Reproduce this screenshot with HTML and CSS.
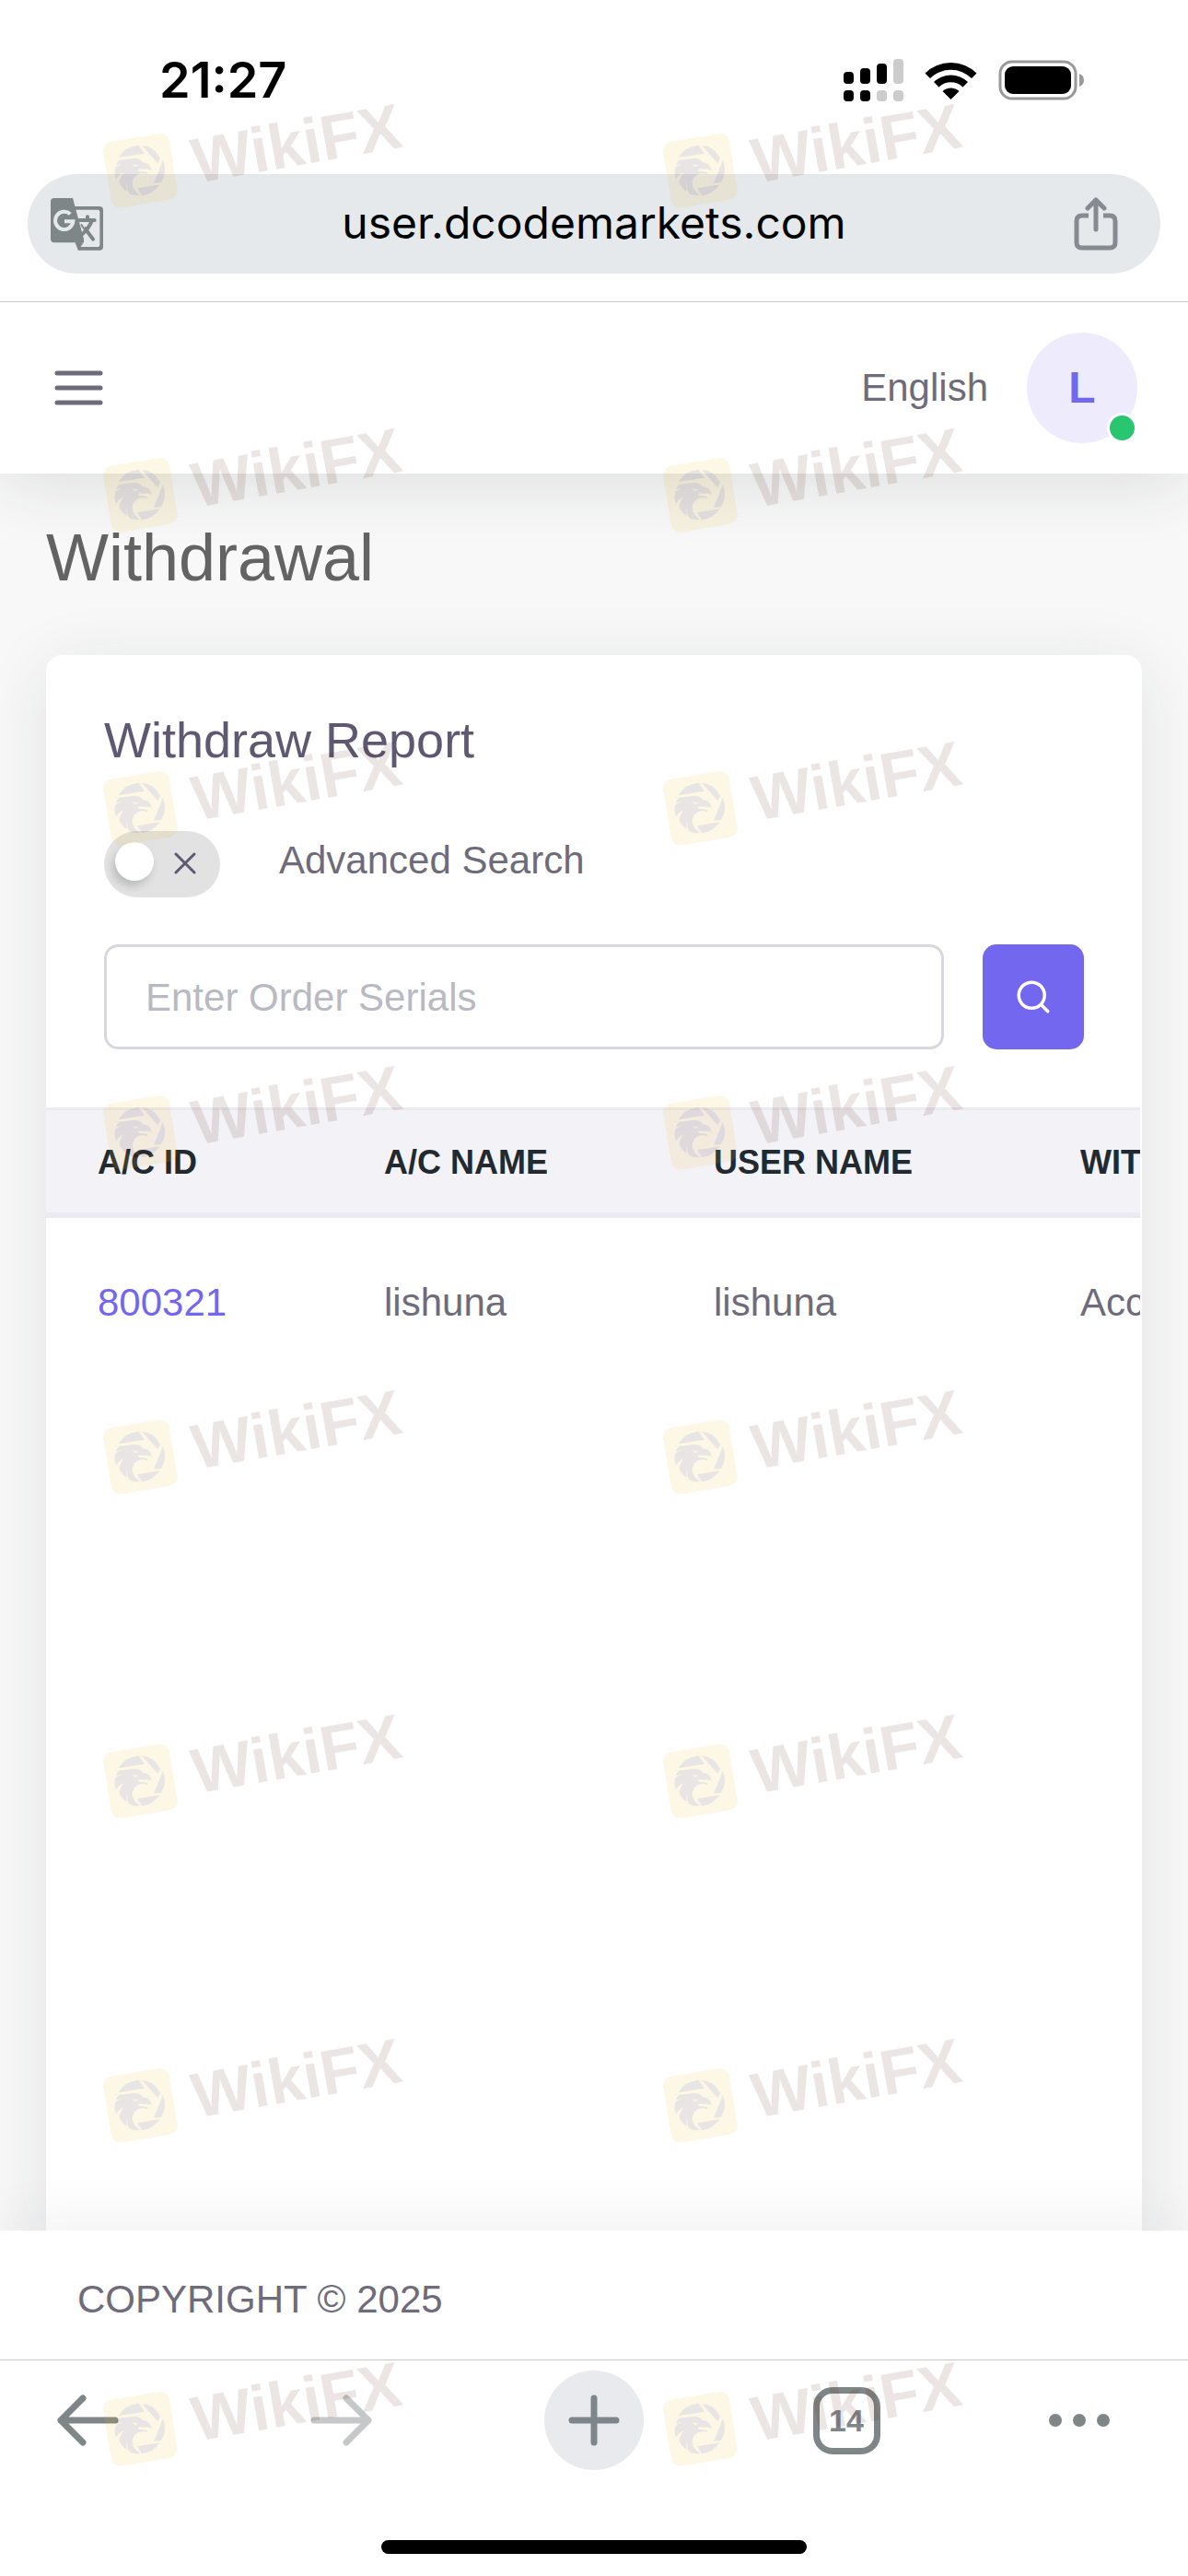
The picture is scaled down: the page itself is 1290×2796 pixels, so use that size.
FILE: index.html
```html
<!DOCTYPE html>
<html lang="en">
<head>
    <meta charset="UTF-8">
    <meta name="viewport" content="width=device-width, initial-scale=1.0">
    <title>Withdrawal</title>
    <link rel="stylesheet" href="styles.css">
</head>
<body>
    <!-- Phone status bar and address bar -->
    <div class="browser-top">
        <div class="status-bar">
            <span class="time">21:27</span>
            <div class="status-icons">
                <svg width="65" height="46" viewBox="0 0 65 46">
                    <rect x="0" y="14" width="11" height="13" rx="4"/>
                    <rect x="18" y="10" width="11" height="17" rx="4"/>
                    <rect x="36" y="5" width="11" height="22" rx="4"/>
                    <rect class="dim" x="54" y="0" width="11" height="27" rx="4"/>
                    <rect x="0" y="34" width="11" height="12" rx="4"/>
                    <rect x="18" y="34" width="11" height="12" rx="4"/>
                    <rect class="dim" x="36" y="34" width="11" height="12" rx="4"/>
                    <rect class="dim" x="54" y="34" width="11" height="12" rx="4"/>
                </svg>
                <svg width="57" height="42" viewBox="0 0 57 42">
                    <path d="M0.5 13.5A40 40 0 0 1 56.5 13.5L51 19A32 32 0 0 0 6 19Z"/>
                    <path d="M10 23A26.500 26.500 0 0 1 47 23L41.500 28.500A18.500 18.500 0 0 0 15.500 28.500Z"/>
                    <path d="M19.500 33A13 13 0 0 1 37.500 33L28.500 42Z"/>
                </svg>
                <svg width="93" height="44" viewBox="0 0 93 44">
                    <rect x="2" y="2" width="82" height="40" rx="13" fill="none" stroke="#999" stroke-width="3"/>
                    <rect x="7" y="7" width="72" height="30" rx="9"/>
                    <path class="cap" d="M88 15Q93 17 93 22T88 29Z"/>
                </svg>
            </div>
        </div>
        <div class="url-bar">
            <button class="icon-btn" aria-label="Translate">
                <svg width="57" height="57" viewBox="0 0 171 171">
                    <path fill="#7f8687" d="M74 27H159a12 12 0 0 1 12 12V158a12 12 0 0 1-12 12H90L80 143Z"/>
                    <path fill="#e5e9ec" d="M80 38H154a6 6 0 0 1 6 6V153a6 6 0 0 1-6 6H88L108 136Z"/>
                    <path fill="#7f8687" d="M12 0H72L108 134V145H12A12 12 0 0 1 0 133V12A12 12 0 0 1 12 0Z"/>
                    <path fill="#7f8687" d="M80 145H107L90 170Z"/>
                    <path fill="none" stroke="#e5e9ec" stroke-width="12" d="M64 52A29 29 0 1 0 73 76H45"/>
                    <path fill="none" stroke="#7f8687" stroke-width="12" stroke-linecap="round" d="M92 72H143M120 61V72M134 74Q124 100 98 122M104 88L138 134"/>
                    <path fill="#e5e9ec" d="M98 79H119Q116 90 110 97Z"/>
                </svg>
            </button>
            <span class="url">user.dcodemarkets.com</span>
            <button class="icon-btn" aria-label="Share">
                <svg width="48" height="58" viewBox="0 0 48 58" fill="none" stroke="#868b91" stroke-width="5" stroke-linecap="round" stroke-linejoin="round">
                    <path stroke-linecap="butt" d="M16 20H9Q3 20 3 26V49Q3 55 9 55H39Q45 55 45 49V26Q45 20 39 20H32"/>
                    <path d="M24 35V3M15 12L24 3L33 12"/>
                </svg>
            </button>
        </div>
    </div>

    <header class="navbar">
        <button class="icon-btn" aria-label="Open menu">
            <svg width="53" height="38" viewBox="0 0 53 38" stroke="#6e6b7b" stroke-width="5" stroke-linecap="round">
                <path d="M3 3H50M3 19H50M3 35H50"/>
            </svg>
        </button>
        <nav class="navbar-right">
            <a class="language" href="#">English</a>
            <a class="avatar" href="#">L<span class="avatar-status"></span></a>
        </nav>
    </header>

    <main class="content">
        <h1>Withdrawal</h1>

        <section class="card">
            <div class="card-header">
                <h2>Withdraw Report</h2>
                <div class="advanced">
                    <span class="switch">
                        <input type="checkbox" id="advanced-search">
                        <svg class="switch-icon" width="24" height="24" viewBox="0 0 24 24" stroke="#5e5873" stroke-width="3" stroke-linecap="round">
                            <path d="M2 2L22 22M22 2L2 22"/>
                        </svg>
                    </span>
                    <label for="advanced-search">Advanced Search</label>
                </div>
                <form class="search-form">
                    <input type="text" placeholder="Enter Order Serials" aria-label="Enter Order Serials">
                    <button type="button" class="search-btn" aria-label="Search">
                        <svg width="42" height="42" viewBox="0 0 24 24" fill="none" stroke="#fff" stroke-width="2" stroke-linecap="round">
                            <circle cx="11" cy="11" r="8"/>
                            <path d="M21 21L17 17"/>
                        </svg>
                    </button>
                </form>
            </div>

            <div class="table-wrap">
                <table>
                    <colgroup>
                        <col class="col-id">
                        <col class="col-name">
                        <col class="col-user">
                        <col class="col-method">
                    </colgroup>
                    <thead>
                        <tr>
                            <th>A/C ID</th>
                            <th>A/C Name</th>
                            <th>User Name</th>
                            <th>Withdraw</th>
                        </tr>
                    </thead>
                    <tbody>
                        <tr>
                            <td><a href="#">800321</a></td>
                            <td>lishuna</td>
                            <td>lishuna</td>
                            <td>Account</td>
                        </tr>
                    </tbody>
                </table>
            </div>
        </section>
    </main>

    <footer class="footer">COPYRIGHT © 2025</footer>

    <!-- Browser toolbar -->
    <div class="browser-bottom">
        <div class="toolbar">
            <button class="icon-btn" aria-label="Back">
                <svg width="67" height="56" viewBox="0 0 67 56" fill="none" stroke="#7f8687" stroke-width="7" stroke-linecap="round" stroke-linejoin="round">
                    <path d="M63 28H4M28 4L4 28L28 52"/>
                </svg>
            </button>
            <button class="icon-btn" aria-label="Forward">
                <svg width="67" height="56" viewBox="0 0 67 56" fill="none" stroke="#c6c7c8" stroke-width="7" stroke-linecap="round" stroke-linejoin="round">
                    <path d="M4 28H63M39 4L63 28L39 52"/>
                </svg>
            </button>
            <button class="icon-btn new-tab" aria-label="New tab">
                <svg width="56" height="56" viewBox="0 0 56 56" stroke="#7f868b" stroke-width="7" stroke-linecap="round">
                    <path d="M4 28H52M28 4V52"/>
                </svg>
            </button>
            <button class="icon-btn tabs" aria-label="14 tabs">14</button>
            <button class="icon-btn" aria-label="More">
                <svg width="68" height="16" viewBox="0 0 68 16" fill="#7f8687">
                    <circle cx="8" cy="8" r="7"/>
                    <circle cx="34" cy="8" r="7"/>
                    <circle cx="60" cy="8" r="7"/>
                </svg>
            </button>
        </div>
        <div class="home-indicator"></div>
    </div>

    <!-- Watermark layer -->
    <svg class="watermark" viewBox="0 0 1290 2796" aria-hidden="true">
        <defs>
            <g id="mark">
                <g transform="scale(0.3333)">
                    <rect x="48" y="171" width="218" height="218" rx="30" transform="rotate(-9.500 157 280)" fill="#eeba25"/>
                    <g fill="#502828">
                        <path d="M86 237Q108 200 152 197L171 224Z"/>
                        <path d="M162 197Q202 200 222 239L214 256Z"/>
                        <path d="M231 246Q246 285 225 318L201 321Z"/>
                        <path d="M221 325Q196 358 162 361L147 337Z"/>
                        <path d="M88 245L140 239Q157 240 163 251Q190 254 194 278Q182 273 170 275L152 274Q150 279 152 282Q167 281 180 286V291Q152 284 137 302Q124 325 140 346L156 360Q136 364 121 354Q112 340 113 318Q110 335 113 348Q97 338 88 318Q90 302 104 284Q86 293 78 308Q70 288 76 269Q84 260 98 261Q86 258 77 263Q80 252 88 245Z"/>
                    </g>
                    <path fill="#eeba25" d="M131 259Q142 263 151 260Q147 268 139 266Z"/>
                </g>
                <text x="113" y="107" transform="rotate(-10 113 107)">WikiFX</text>
            </g>
        </defs>
        <g class="marks">
            <use href="#mark" x="100" y="92"/>
            <use href="#mark" x="708" y="92"/>
            <use href="#mark" x="100" y="444"/>
            <use href="#mark" x="708" y="444"/>
            <use href="#mark" x="100" y="784"/>
            <use href="#mark" x="708" y="784"/>
            <use href="#mark" x="100" y="1136"/>
            <use href="#mark" x="708" y="1136"/>
            <use href="#mark" x="100" y="1488"/>
            <use href="#mark" x="708" y="1488"/>
            <use href="#mark" x="100" y="1840"/>
            <use href="#mark" x="708" y="1840"/>
            <use href="#mark" x="100" y="2192"/>
            <use href="#mark" x="708" y="2192"/>
            <use href="#mark" x="100" y="2543"/>
            <use href="#mark" x="708" y="2543"/>
        </g>
    </svg>
</body>
</html>
```

FILE: styles.css
```css
* {
    box-sizing: border-box;
}
body {
    position: relative;
    display: flex;
    flex-direction: column;
    min-height: 100vh;
    margin: 0;
    background-color: #f8f8f8;
    color: #6e6b7b;
    font-family: "Liberation Sans", Arial, sans-serif;
    font-size: 42px;
    line-height: 60px;
}
h1, h2 {
    margin: 0;
    font-weight: normal;
}
a {
    color: #7367f0;
    text-decoration: none;
}
svg {
    display: block;
}
.icon-btn {
    display: flex;
    align-items: center;
    justify-content: center;
    padding: 0;
    border: none;
    background: none;
    cursor: pointer;
}

/* browser top */
.browser-top {
    position: relative;
    z-index: 2;
    padding: 56px 30px 30px;
    background: white;
    border-bottom: 1px solid #c8c8c8;
}
.status-bar {
    display: flex;
    align-items: center;
    justify-content: space-between;
    padding: 0 83px 0 143px;
    margin-bottom: 71px;
}
.time {
    color: #000;
    font-family: Inter, sans-serif;
    font-size: 54px;
    font-weight: 600;
    line-height: 62px;
}
.status-icons {
    display: flex;
    align-items: center;
    gap: 23px;
}
.dim {
    fill: #ccc;
}
.cap {
    fill: #999;
}
.url-bar {
    display: flex;
    align-items: center;
    height: 108px;
    padding: 0 46px 0 25px;
    border-radius: 54px;
    background: #e5e9ec;
}
.url {
    flex: 1;
    padding: 0 0 3px 12px;
    color: #000;
    font-family: Inter, sans-serif;
    font-size: 48px;
    text-align: center;
}

/* app header */
.navbar {
    position: relative;
    z-index: 1;
    display: flex;
    align-items: center;
    justify-content: space-between;
    height: 186px;
    padding: 0 55px 0 59px;
    background: white;
    box-shadow: 0 12px 72px rgba(34,41,47,0.12);
}
.navbar-right {
    display: flex;
    align-items: center;
    gap: 42px;
}
.language {
    color: #6e6b7b;
}
.avatar {
    position: relative;
    width: 120px;
    height: 120px;
    border-radius: 50%;
    background: #eeebfd;
    font-size: 48px;
    font-weight: bold;
    line-height: 120px;
    text-align: center;
}
.avatar-status {
    position: absolute;
    right: 0;
    bottom: 0;
    width: 33px;
    height: 33px;
    border: 3px solid white;
    border-radius: 50%;
    background: #28c76f;
}

/* page */
.content {
    display: flex;
    flex: 1;
    flex-direction: column;
    padding: 51px 50px 0;
}
h1 {
    margin-bottom: 66px;
    color: #636363;
    font-size: 72px;
    line-height: 80px;
}
.card {
    flex: 1;
    border-radius: 18px 18px 0 0;
    background: white;
    box-shadow: 0 12px 72px rgba(34,41,47,0.1);
}
.card-header {
    padding: 60px 63px 63px;
}
h2 {
    margin-bottom: 66px;
    color: #5e5873;
    font-size: 54px;
    line-height: 65px;
}
.advanced {
    display: flex;
    align-items: flex-start;
    gap: 64px;
    margin-bottom: 51px;
}
.advanced label {
    line-height: 64px;
}
.switch {
    position: relative;
    height: 72px;
}
.switch input {
    display: block;
    width: 126px;
    height: 72px;
    margin: 0;
    border-radius: 36px;
    background: #e2e2e2;
    appearance: none;
}
.switch input::before {
    content: "";
    display: block;
    float: left;
    width: 42px;
    height: 42px;
    margin: 12px;
    border-radius: 50%;
    background: white;
    box-shadow: -3px 6px 9px rgba(34,41,47,0.2);
}
.switch input:checked {
    background: #7367f0;
}
.switch-icon {
    position: absolute;
    top: 23px;
    right: 26px;
    pointer-events: none;
}
.search-form {
    display: flex;
    gap: 42px;
}
.search-form input {
    flex: 1;
    min-width: 0;
    height: 114px;
    padding: 2px 42px 0;
    border: 3px solid #d8d6de;
    border-radius: 15px;
    color: #6e6b7b;
    font: inherit;
}
.search-form input::placeholder {
    color: #b9b9c3;
}
.search-btn {
    display: flex;
    align-items: center;
    justify-content: center;
    width: 110px;
    height: 114px;
    padding: 0;
    border: none;
    border-radius: 15px;
    background: #7367f0;
    cursor: pointer;
}

/* table */
.table-wrap {
    margin-right: 2px;
    overflow-x: auto;
    scrollbar-width: none;
}
table {
    width: 1600px;
    border-collapse: separate;
    border-spacing: 0;
    table-layout: fixed;
}
.col-id {
    width: 311px;
}
.col-name {
    width: 358px;
}
.col-user {
    width: 398px;
}
th, td {
    padding: 31px 0 29px 56px;
    text-align: left;
    white-space: nowrap;
}
th {
    border-top: 3px solid #ebe9f1;
    border-bottom: 6px solid #ebe9f1;
    background: #f3f2f7;
    color: #22292f;
    font-size: 36px;
    line-height: 51px;
    text-transform: uppercase;
}
td {
    padding-top: 62px;
    padding-bottom: 62px;
}

.footer {
    position: relative;
    padding: 45px 84px 35px;
    background: white;
    box-shadow: 0 -12px 60px rgba(34,41,47,0.06);
}

/* browser bottom */
.browser-bottom {
    position: relative;
    padding: 11px 0 24px;
    border-top: 1px solid #c8c8c8;
    background: white;
}
.toolbar {
    display: grid;
    grid-template-columns: 190fr 360fr 190fr 358fr 148fr;
    align-items: center;
    justify-items: center;
    padding-right: 44px;
    margin-bottom: 76px;
}
.new-tab {
    width: 108px;
    height: 108px;
    border-radius: 50%;
    background: #e8eaed;
}
.tabs {
    width: 73px;
    height: 73px;
    border: 7px solid #7f8687;
    border-radius: 21px;
    color: #7f8687;
    font-family: "Liberation Sans", Arial, sans-serif;
    font-size: 34px;
    font-weight: bold;
}
.home-indicator {
    width: 462px;
    height: 15px;
    margin: 0 auto;
    border-radius: 8px;
    background: #000;
}

.watermark {
    position: absolute;
    top: 0;
    left: 0;
    z-index: 3;
    width: 100%;
    pointer-events: none;
}
.marks {
    opacity: 0.12;
    fill: #5a2514;
    font-family: "Liberation Sans", Arial, sans-serif;
    font-size: 69px;
    font-weight: bold;
}
.marks text {
    stroke: #5a2514;
    stroke-width: 3px;
    stroke-linejoin: round;
}
```
